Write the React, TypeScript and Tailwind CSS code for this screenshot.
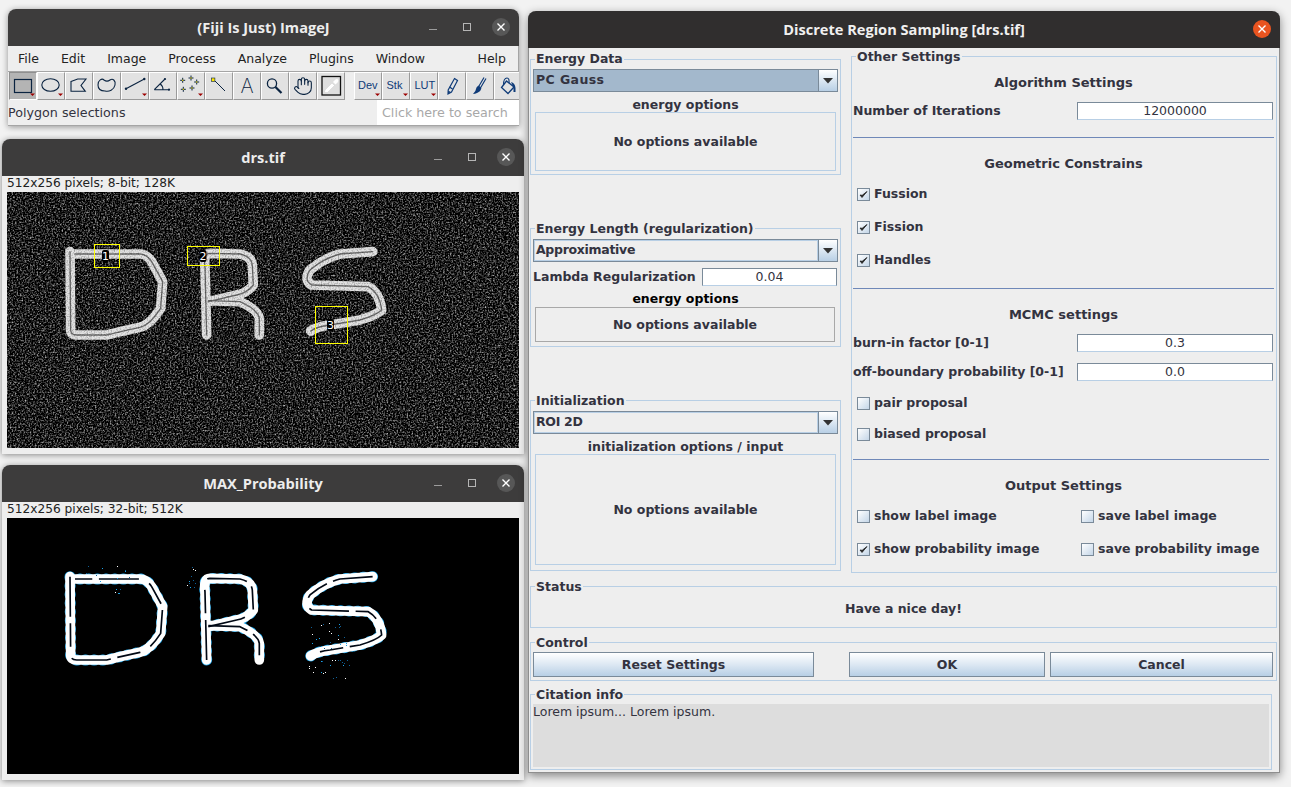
import React from "react";
import { Hand } from "lucide-react";

const D = "M90 65 L92 300 Q92 315 110 315 L200 315 Q240 305 300 292 Q330 285 362 235 L368 155 L335 95 Q320 72 300 72 L105 72";
const R1 = "M500 315 L495 110 Q490 70 510 70 L600 72 Q635 80 637 105 L640 165 Q620 190 590 195 L505 215";
const R2 = "M505 212 L600 215 Q655 240 658 265 L658 315";
const S = "M998 65 L900 72 Q850 85 810 120 Q790 150 815 165 L985 170 Q1020 190 1025 240 Q1010 255 960 270 L870 285 Q830 290 812 303";
const letters = [D, R1, R2, S];

function specks(seed: number, cx: number, cy: number, rx: number, ry: number, n: number) {
  const out: { x: number; y: number; c: string }[] = [];
  let s = seed;
  const next = () => {
    s = (s * 16807) % 2147483647;
    return (s % 1000) / 1000;
  };
  for (let i = 0; i < n; i++) {
    const c = next();
    out.push({
      x: Math.round(cx + (next() - 0.5) * 2 * rx),
      y: Math.round(cy + (next() - 0.5) * 2 * ry),
      c: c > 0.75 ? "#ffffff" : c > 0.4 ? "#1aa3e8" : "#0e5f96",
    });
  }
  return out;
}

function DrsImage() {
  const rois = [
    { x: 87, y: 52, w: 25, h: 23, n: "1", lx: 98.5, ly: 64 },
    { x: 180, y: 54, w: 32, h: 19, n: "2", lx: 196, ly: 64 },
    { x: 308, y: 114, w: 32, h: 37, n: "3", lx: 323.5, ly: 133 },
  ];
  return (
    <svg width="512" height="256" viewBox="0 0 512 256" className="block">
      <defs>
        <filter id="noiseA" x="0" y="0" width="100%" height="100%" colorInterpolationFilters="sRGB">
          <feTurbulence type="fractalNoise" baseFrequency="0.6" numOctaves="2" seed="4" />
          <feColorMatrix type="matrix" values="1.6 0 0 0 -0.68  1.6 0 0 0 -0.68  1.6 0 0 0 -0.68  0 0 0 0 1" />
        </filter>
        <filter id="noiseB" x="0" y="0" width="100%" height="100%" colorInterpolationFilters="sRGB">
          <feTurbulence type="fractalNoise" baseFrequency="0.7" numOctaves="1" seed="9" />
          <feColorMatrix type="matrix" values="0 0 0 0 0  0 0 0 0 0  0 0 0 0 0  3 0 0 0 -1.35" />
        </filter>
      </defs>
      <rect width="512" height="256" fill="#000" />
      <rect width="512" height="256" filter="url(#noiseA)" />
      <g transform="translate(33,38) scale(0.3333)" fill="none" strokeLinecap="round" strokeLinejoin="round">
        {letters.map((d) => (
          <path key={d} d={d} stroke="#e2e2e2" strokeWidth="29" />
        ))}
        {letters.map((d) => (
          <path key={d} d={d} stroke="#6a6a6a" strokeWidth="4" />
        ))}
      </g>
      <rect width="512" height="256" filter="url(#noiseB)" opacity="0.3" />
      {rois.map((r) => (
        <g key={r.n}>
          <rect x={r.x + 0.5} y={r.y + 0.5} width={r.w} height={r.h} fill="none" stroke="#ffff00" />
          <rect x={r.lx - 3.5} y={r.ly - 6} width="7" height="12" rx="2" fill="#000" />
          <text x={r.lx} y={r.ly + 4} textAnchor="middle" fontSize="11" fill="#fff" fontFamily="'DejaVu Sans', sans-serif">
            {r.n}
          </text>
        </g>
      ))}
    </svg>
  );
}

function ProbImage() {
  const dots = [
    ...specks(11, 100, 56, 22, 8, 14),
    ...specks(23, 108, 74, 5, 3, 5),
    ...specks(37, 186, 58, 8, 12, 12),
    ...specks(51, 322, 118, 18, 14, 24),
    ...specks(73, 322, 150, 20, 10, 22),
  ];
  return (
    <svg width="512" height="256" viewBox="0 0 512 256" className="block">
      <rect width="512" height="256" fill="#000" />
      <g transform="translate(33,37) scale(0.3333)" fill="none" strokeLinecap="round" strokeLinejoin="round">
        {letters.map((d) => (
          <path key={d} d={d} stroke="#1aa3e8" strokeWidth="33" strokeDasharray="3 23" />
        ))}
        {letters.map((d) => (
          <path key={d} d={d} stroke="#ffffff" strokeWidth="29" />
        ))}
        {letters.map((d) => (
          <path key={d} d={d} stroke="#000814" strokeWidth="5" strokeDasharray="120 20 70 35" strokeLinecap="butt" />
        ))}
      </g>
      {dots.map((p, i) => (
        <rect key={i} x={p.x} y={p.y} width="1" height="1" fill={p.c} />
      ))}
    </svg>
  );
}

const NAVY = "#0a2340";
const BLUE = "#0f3b78";

function Tri({ x = 22 }: { x?: number }) {
  return <path d={`M${x} 21.5 L${x + 5} 21.5 L${x + 2.5} 24 Z`} fill="#9c0000" />;
}

const icons: React.ReactNode[] = [
  <>
    <rect x="5.5" y="7.5" width="17" height="13" fill="none" stroke={NAVY} strokeWidth="1.2" />
    <Tri x={21} />
  </>,
  <>
    <ellipse cx="13.5" cy="13" rx="8.7" ry="6.3" fill="none" stroke={NAVY} strokeWidth="1.1" />
    <Tri x={21} />
  </>,
  <path d="M6 9.5 L12.7 7 L21 7 L16 13.5 L20.3 19.3 L6 19.3 Z" fill="none" stroke={NAVY} strokeWidth="1.1" />,
  <path d="M5 13 C5 8 9 6 11 8 C13 9.5 15 9.5 17 8 C20 6 23 9 22 13 C21 18 16 20 12 19 C8 19 5 17 5 13 Z" fill="none" stroke={NAVY} strokeWidth="1.1" />,
  <>
    <path d="M5 16.7 L23.3 7" stroke={NAVY} strokeWidth="1.1" fill="none" />
    <circle cx="5" cy="16.7" r="1.2" fill={NAVY} />
    <circle cx="23.3" cy="7" r="1.2" fill={NAVY} />
    <Tri x={21} />
  </>,
  <>
    <path d="M5.3 17.7 L16 7 M5.3 17.7 L20 17.7 M11 11.8 Q14 14 14 17.7" stroke={NAVY} strokeWidth="1.1" fill="none" />
    <circle cx="16" cy="7" r="1.1" fill={NAVY} />
    <circle cx="20" cy="17.7" r="1.1" fill={NAVY} />
  </>,
  <>
    {[
      [5.7, 8.3],
      [14, 6],
      [19.7, 10],
      [6.3, 17.3],
      [15, 16],
    ].map(([x, y]) => (
      <g key={x}>
        <path d={`M${x - 2.5} ${y} H${x + 2.5} M${x} ${y - 2.5} V${y + 2.5}`} stroke={NAVY} strokeWidth="1" />
        <rect x={x - 0.6} y={y - 0.6} width="1.2" height="1.2" fill="#ffe600" />
      </g>
    ))}
    <Tri x={21} />
  </>,
  <>
    <path d="M9 8 L20 19" stroke={NAVY} strokeWidth="1" />
    <rect x="6.5" y="6" width="3.4" height="3.4" fill="#ffe600" stroke={NAVY} strokeWidth="0.6" />
  </>,
  <text x="14" y="20.5" textAnchor="middle" fontSize="20" fill={NAVY} fontFamily="Inter, 'Liberation Sans', sans-serif" fontWeight="200">
    A
  </text>,
  <>
    <circle cx="11" cy="11.5" r="4.6" fill="none" stroke={NAVY} strokeWidth="1.3" />
    <path d="M14.5 15 L20.5 21" stroke={NAVY} strokeWidth="2.2" />
  </>,
  <foreignObject x="4" y="4" width="20" height="20">
    <Hand size={20} strokeWidth={1.3} color={NAVY} />
  </foreignObject>,
  <>
    <rect x="5" y="4.5" width="18.5" height="18.5" fill="#dedede" stroke="#111" strokeWidth="1.3" />
    <path d="M7.5 20.5 L8 18 L15 11 L17.5 13.5 L10.5 20.5 Z" fill="#fff" stroke="#cfcfcf" strokeWidth="0.5" />
    <path d="M16 10 L18.5 7.5 Q20 6.5 21 7.5 Q22 9 20.5 10.5 L18.5 12.5 Z" fill="#fff" />
  </>,
];

const icons2: React.ReactNode[] = [
  <>
    <text x="4" y="17" fontSize="11" fill={BLUE} fontFamily="'Liberation Sans', sans-serif">Dev</text>
    <Tri x={21} />
  </>,
  <>
    <text x="4.5" y="17" fontSize="11" fill={BLUE} fontFamily="'Liberation Sans', sans-serif">Stk</text>
    <Tri x={21} />
  </>,
  <>
    <text x="4.5" y="17" fontSize="11" fill={BLUE} fontFamily="'Liberation Sans', sans-serif">LUT</text>
    <Tri x={21} />
  </>,
  <>
    <path d="M16.5 6.5 L19.5 8.5 L13.5 20 L10 22 L10.2 18 Z" fill="none" stroke={BLUE} strokeWidth="1.2" />
    <path d="M10 22 L10.2 18.5 L12.8 20 Z" fill={BLUE} />
    <path d="M11.5 15 L14.5 17" stroke={BLUE} strokeWidth="1.4" />
  </>,
  <>
    <path d="M18 5.5 L13 14 M20 6.5 L15 15" stroke={BLUE} strokeWidth="1.2" />
    <path d="M12.5 13.5 L15.5 15.5 Q15 19.5 11 21 Q9 22 7 22 Q10 19 10 17 Q10 15 12.5 13.5 Z" fill={BLUE} />
  </>,
  <>
    <path d="M12.5 9 L20 15 L14 21.5 L7.5 15.5 Z" fill="none" stroke={BLUE} strokeWidth="1.3" />
    <path d="M9.5 13 Q9.5 6 13 6 Q15.5 6 15 11" fill="none" stroke={BLUE} strokeWidth="1.1" />
    <path d="M17 10 Q21 11 21.5 16 L21.5 20 L19.5 20 L19.5 15.5 Z" fill={BLUE} />
  </>,
];

function ToolButton({ children, active }: { children: React.ReactNode; active?: boolean }) {
  return (
    <div
      className={
        "h-[28px] w-[28px] shrink-0 border-t border-l border-r border-b " +
        (active
          ? "bg-[#b4b4b4] border-t-[#8f8f8f] border-l-[#8f8f8f] border-r-white border-b-white"
          : "bg-[#e2e2e2] border-t-white border-l-white border-r-[#9a9a9a] border-b-[#9a9a9a]")
      }
    >
      <svg width="28" height="28" viewBox="0 0 28 28" className="-mt-px -ml-px block">
        {children}
      </svg>
    </div>
  );
}

function WinControls() {
  return (
    <div className="flex items-center">
      <div className="h-px w-[8px] bg-[#9c9c9c] mt-[4px]" />
      <div className="ml-[26px] h-[8px] w-[8px] border border-[#b5b5b5]" />
      <div className="ml-[21px] flex h-[18px] w-[18px] items-center justify-center rounded-full bg-[#575757]">
        <svg width="10" height="10" viewBox="0 0 10 10">
          <path d="M1.5 1.5 L8.5 8.5 M8.5 1.5 L1.5 8.5" stroke="#fff" strokeWidth="1.4" />
        </svg>
      </div>
    </div>
  );
}

function ImageWindow({ title, info, top, children }: { title: string; info: string; top: string; children: React.ReactNode }) {
  return (
    <div className={"absolute left-[2px] w-[522px] rounded-t-[8px] bg-[#eeeeee] shadow-[0_1px_6px_rgba(0,0,0,0.45)] " + top}>
      <div className="relative flex h-[37px] items-center justify-center rounded-t-[8px] bg-[#3d3c3c]">
        <span className="font-['Open_Sans'] text-[14.6px] font-bold text-[#ededed]">{title}</span>
        <div className="absolute right-[9px] top-[9px]">
          <WinControls />
        </div>
      </div>
      <div className="h-[16px] pl-[5px] font-['DejaVu_Sans'] text-[12.2px] leading-[15px] text-[#222]">{info}</div>
      <div className="pb-[6px] pl-[5px]">{children}</div>
    </div>
  );
}

const BOLD = "font-['DejaVu_Sans'] text-[12.5px] font-bold text-[#333340] leading-[16px]";
const PLAIN = "font-['DejaVu_Sans'] text-[12.5px] text-[#333340] leading-[16px]";

function Titled({ title, className, first, children }: { title: string; className: string; first?: boolean; children: React.ReactNode }) {
  return (
    <fieldset className={"block border border-[#b8cfe5] " + className}>
      <legend className={"ml-[4px] h-[16px] px-[1px] " + BOLD}>
        <span className={"relative " + (first ? "" : "top-[1px]")}>{title}</span>
      </legend>
      {children}
    </fieldset>
  );
}

function Combo({ label, selected, className, track }: { label: string; selected?: boolean; className: string; track: string }) {
  return (
    <div className={"flex h-[23px] border border-[#7a8a99] bg-[#eeeeee] " + className}>
      <div className={"flex-1 pl-[1px] " + BOLD + " !leading-[17px] " + track + " " + (selected ? "bg-[#a3b8cc] border border-[#a3b8cc]" : "border border-[#b8cfe5]")}>{label}</div>
      <div className="flex w-[19px] items-center justify-center border-l border-[#7a8a99] bg-gradient-to-b from-[#ffffff] to-[#b8cfe5]">
        <svg width="10" height="6" viewBox="0 0 10 6">
          <path d="M0 0 H10 L5 5.5 Z" fill="#333" />
        </svg>
      </div>
    </div>
  );
}

function Input({ value, className }: { value: string; className: string }) {
  return (
    <div className={"flex h-[18px] items-center justify-center border-t border-l border-r border-t-[#7a8a99] border-l-[#7a8a99] border-r-[#7a8a99] border-b border-b-[#b8cfe5] bg-white " + PLAIN + " " + className}>
      {value}
    </div>
  );
}

function Check({ label, checked, className }: { label: string; checked?: boolean; className?: string }) {
  return (
    <div className={"flex h-[20px] items-center gap-[4px] " + (className ?? "")}>
      <div className="flex h-[13px] w-[13px] items-center justify-center border border-[#7a8a99] bg-gradient-to-br from-[#ffffff] to-[#c4d6e8]">
        {checked && (
          <svg width="9" height="9" viewBox="0 0 9 9">
            <path d="M1 5 L3 7.5 L8 1.5 L3.2 5.3 Z" fill="#222" stroke="#222" strokeWidth="0.8" />
          </svg>
        )}
      </div>
      <span className={BOLD}>{label}</span>
    </div>
  );
}

function Heading({ text, className }: { text: string; className: string }) {
  return <div className={"flex h-[20px] items-center justify-center " + BOLD + " !text-[13px] " + className}>{text}</div>;
}

function Sep({ className }: { className: string }) {
  return <div className={"h-px bg-[#6f88b8] " + className} />;
}

function FieldRow({ label, value, className }: { label: string; value: string; className: string }) {
  return (
    <div className={"flex h-[20px] items-center justify-between pr-[1px] " + className}>
      <span className={BOLD}>{label}</span>
      <Input value={value} className="w-[196px]" />
    </div>
  );
}

function OptionBox({ h, className, gray }: { h: string; className: string; gray?: boolean }) {
  return (
    <div className={"flex items-center justify-center border " + (gray ? "border-[#a8a8a8] " : "border-[#b8cfe5] ") + h + " " + className + " " + BOLD}>
      No options available
    </div>
  );
}

function SmallLabel({ text, black, className }: { text: string; black?: boolean; className: string }) {
  return <div className={"h-[16px] text-center " + BOLD + " " + (black ? "!text-black " : "") + className}>{text}</div>;
}

function Btn({ label, className }: { label: string; className: string }) {
  return (
    <div className={"flex h-[25px] items-center justify-center border border-[#7a8a99] bg-gradient-to-b from-[#ffffff] via-[#dde8f3] to-[#b8cfe5] " + BOLD + " " + className}>
      {label}
    </div>
  );
}

export default function App() {
  return (
    <div className="relative h-[787px] w-[1291px] overflow-hidden bg-[#f2f2f2]">
      {/* ImageJ main window */}
      <div className="absolute left-[8px] top-[9px] w-[511px] rounded-t-[8px] border-b border-[#a5a5a5] bg-[#eeeeee] shadow-[0_1px_6px_rgba(0,0,0,0.4)]">
        <div className="relative flex h-[37px] items-center justify-center rounded-t-[8px] bg-[#3d3c3c]">
          <span className="font-['Open_Sans'] text-[14.6px] font-bold text-[#ededed]">(Fiji Is Just) ImageJ</span>
          <div className="absolute right-[9px] top-[9px]">
            <WinControls />
          </div>
        </div>
        <div className="flex h-[26px] items-center gap-[22px] border-r border-b border-[#a5a5a5] pl-[10px] pr-[12px] pt-[1px] font-['DejaVu_Sans'] text-[12.5px] text-[#222]">
          <span>File</span>
          <span>Edit</span>
          <span>Image</span>
          <span>Process</span>
          <span>Analyze</span>
          <span>Plugins</span>
          <span>Window</span>
          <span className="ml-auto">Help</span>
        </div>
        <div className="flex h-[28px] overflow-hidden pl-[1px]">
          {icons.map((ic, i) => (
            <ToolButton key={i} active={i === 0}>
              {ic}
            </ToolButton>
          ))}
          <div className="w-[9px] shrink-0" />
          {icons2.map((ic, i) => (
            <ToolButton key={i}>{ic}</ToolButton>
          ))}
        </div>
        <div className="flex h-[25px] items-center justify-between font-['DejaVu_Sans'] text-[12.7px]">
          <span className="text-[#333340]">Polygon selections</span>
          <div className="flex h-full w-[142px] items-center bg-white pl-[5px] text-[#a8a8a8]">Click here to search</div>
        </div>
      </div>

      <ImageWindow title="drs.tif" info="512x256 pixels; 8-bit; 128K" top="top-[139px]">
        <DrsImage />
      </ImageWindow>
      <ImageWindow title="MAX_Probability" info="512x256 pixels; 32-bit; 512K" top="top-[465px]">
        <ProbImage />
      </ImageWindow>

      {/* Dialog */}
      <div className="absolute left-[528px] top-[11px] flex h-[762px] w-[752px] flex-col rounded-t-[8px] border-b border-x border-[#8e8e8e] bg-[#eeeeee] shadow-[0_3px_10px_rgba(0,0,0,0.45)]">
        <div className="relative -mx-px flex h-[37px] shrink-0 items-center justify-center rounded-t-[8px] bg-[#302e2e]">
          <span className="font-['Open_Sans'] text-[14.6px] font-bold text-[#f0f0f0]">Discrete Region Sampling [drs.tif]</span>
          <div className="absolute right-[9px] top-[9px] flex h-[18px] w-[18px] items-center justify-center rounded-full bg-[#e95420]">
            <svg width="10" height="10" viewBox="0 0 10 10">
              <path d="M1.5 1.5 L8.5 8.5 M8.5 1.5 L1.5 8.5" stroke="#fff" strokeWidth="1.4" />
            </svg>
          </div>
        </div>

        <div className="flex flex-1 flex-col pl-[1px] pr-[2px]">
          <div className="flex h-[530px] gap-[10px]">
            {/* Left column */}
            <div className="flex w-[311px] flex-col pt-[3px]">
              <Titled title="Energy Data" first className="h-[124px]">
                <Combo label="PC Gauss" selected track="tracking-[0.4px]" className="mx-[2px] mt-[2px]" />
                <SmallLabel text="energy options" className="mt-[5px]" />
                <OptionBox h="h-[59px]" className="mx-[4px] -mt-px" />
              </Titled>
              <Titled title="Energy Length (regularization)" className="mt-[45px] h-[127px]">
                <Combo label="Approximative" track="tracking-[-0.3px]" className="mx-[2px] mt-[3px]" />
                <div className="mx-[2px] mt-[6px] flex h-[18px] items-center justify-between pr-[1px]">
                  <span className={BOLD}>Lambda Regularization</span>
                  <Input value="0.04" className="w-[135px]" />
                </div>
                <SmallLabel text="energy options" black className="mt-[5px]" />
                <OptionBox h="h-[35px]" gray className="mx-[4px] mr-[5px]" />
              </Titled>
              <Titled title="Initialization" className="mt-[45px] h-[179px]">
                <Combo label="ROI 2D" track="tracking-[-0.3px]" className="mx-[2px] mt-[3px]" />
                <SmallLabel text="initialization options / input" className="mt-[5px]" />
                <OptionBox h="h-[111px]" className="mx-[4px] -mt-px" />
              </Titled>
            </div>
            {/* Right column */}
            <Titled title="Other Settings" className="h-[525px] w-[426px] flex-none">
              <div className="flex flex-col pl-[1px] pr-[2px]">
                <Heading text="Algorithm Settings" className="mt-[9px]" />
                <FieldRow label="Number of Iterations" value="12000000" className="mt-[8px]" />
                <Sep className="mt-[16px]" />
                <Heading text="Geometric Constrains" className="mt-[16px]" />
                <Check label="Fussion" checked className="ml-[4px] mt-[10px]" />
                <Check label="Fission" checked className="ml-[4px] mt-[13px]" />
                <Check label="Handles" checked className="ml-[4px] mt-[13px]" />
                <Sep className="mt-[18px]" />
                <Heading text="MCMC settings" className="mt-[16px]" />
                <FieldRow label="burn-in factor [0-1]" value="0.3" className="mt-[8px]" />
                <FieldRow label="off-boundary probability [0-1]" value="0.0" className="mt-[9px]" />
                <Check label="pair proposal" className="ml-[4px] mt-[11px]" />
                <Check label="biased proposal" className="ml-[4px] mt-[11px]" />
                <Sep className="mt-[15px] mr-[5px]" />
                <Heading text="Output Settings" className="mt-[16px]" />
                <div className="mt-[10px] grid grid-cols-[224px_1fr] gap-y-[13px] pl-[4px]">
                  <Check label="show label image" />
                  <Check label="save label image" />
                  <Check label="show probability image" checked />
                  <Check label="save probability image" />
                </div>
              </div>
            </Titled>
          </div>

          <Titled title="Status" className="h-[50px] w-[747px]">
            <div className={"flex h-[30px] items-center justify-center " + BOLD}>Have a nice day!</div>
          </Titled>
          <Titled title="Control" className="mt-[6px] h-[47px] w-[747px]">
            <div className="mt-[2px] flex pl-[2px] pr-[3px]">
              <Btn label="Reset Settings" className="w-[281px]" />
              <Btn label="OK" className="ml-[35px] w-[196px]" />
              <Btn label="Cancel" className="ml-[5px] w-[223px]" />
            </div>
          </Titled>
          <Titled title="Citation info" className="mt-[5px] h-[84px] w-[742px]">
            <div className={"mx-[2px] mt-[2px] h-[63px] bg-[#dddddd] " + PLAIN}>Lorem ipsum... Lorem ipsum.</div>
          </Titled>
        </div>
      </div>
    </div>
  );
}
